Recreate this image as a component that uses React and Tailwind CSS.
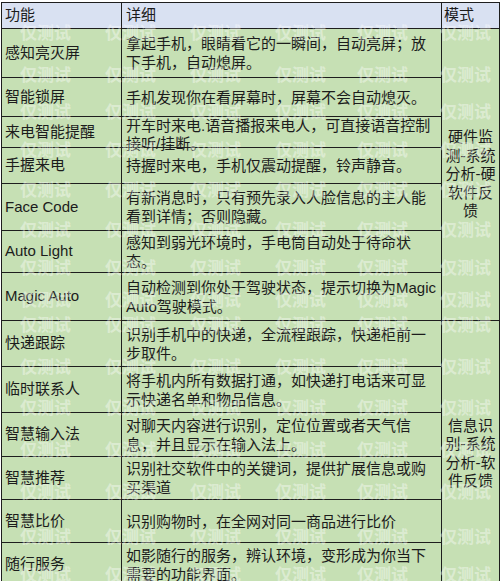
import React from "react";

const rows = [
  { h: "h-[49px]", name: "感知亮灭屏", lines: ["拿起手机，眼睛看它的一瞬间，自动亮屏；放", "下手机，自动熄屏。"] },
  { h: "h-[39px]", name: "智能锁屏", lines: ["手机发现你在看屏幕时，屏幕不会自动熄灭。"] },
  { h: "h-[31px]", name: "来电智能提醒", lines: ["开车时来电.语音播报来电人，可直接语音控制", "接听/挂断。"], tight: true },
  { h: "h-[36px]", name: "手握来电", lines: ["持握时来电，手机仅震动提醒，铃声静音。"] },
  { h: "h-[47px]", name: "Face Code", lines: ["有新消息时，只有预先录入人脸信息的主人能", "看到详情；否则隐藏。"] },
  { h: "h-[42px]", name: "Auto Light", lines: ["感知到弱光环境时，手电筒自动处于待命状", "态。"] },
  { h: "h-[48px]", name: "Magic Auto", lines: ["自动检测到你处于驾驶状态，提示切换为Magic", "Auto驾驶模式。"] },
  { h: "h-[46px]", name: "快递跟踪", lines: ["识别手机中的快递，全流程跟踪，快递柜前一", "步取件。"] },
  { h: "h-[46px]", name: "临时联系人", lines: ["将手机内所有数据打通，如快递打电话来可显", "示快递名单和物品信息。"] },
  { h: "h-[44px]", name: "智慧输入法", lines: ["对聊天内容进行识别，定位位置或者天气信", "息，并且显示在输入法上。"] },
  { h: "h-[43px]", name: "智慧推荐", lines: ["识别社交软件中的关键词，提供扩展信息或购", "买渠道"] },
  { h: "h-[43px]", name: "智慧比价", lines: ["识别购物时，在全网对同一商品进行比价"] },
  { h: "h-[44px]", name: "随行服务", lines: ["如影随行的服务，辨认环境，变形成为你当下", "需要的功能界面。"] },
];

const wmX = [20, 105, 190, 275, 357, 440];
const wmY = [33, 75, 112, 150, 190, 230, 268, 300, 325, 367, 408, 450, 492, 537, 575];

function Row({ r }) {
  return (
    <div className={`flex ${r.h}`}>
      <div className="w-[120px] shrink-0 flex items-center pl-[3px] border-r border-b border-[#1e1e1e] whitespace-nowrap">
        {r.name}
      </div>
      <div
        className={`w-[320px] shrink-0 flex flex-col justify-center pl-[4px] border-r border-b border-[#1e1e1e] whitespace-nowrap ${
          r.tight ? "leading-[18px] pt-[6px]" : "leading-[19px]"
        }`}
      >
        {r.lines.map((l, i) => (
          <div key={i}>{l}</div>
        ))}
      </div>
    </div>
  );
}

export default function App() {
  const first = rows.slice(0, 7);
  const second = rows.slice(7);
  return (
    <div className="relative w-[500px] h-[581px] overflow-hidden bg-white pt-[2px] pl-[1px] text-[15px] text-[#1c1c1c] font-['Liberation_Sans','Noto_Sans_CJK_SC',sans-serif]">
      <div className="w-[499px] border-l border-t border-[#1e1e1e] bg-[#c6e0b4]">
        <div className="flex h-[26px] bg-[#d9e1f2]">
          <div className="w-[120px] flex items-center pl-[3px] border-r border-b border-[#1e1e1e]">功能</div>
          <div className="w-[320px] flex items-center pl-[4px] border-r border-b border-[#1e1e1e]">详细</div>
          <div className="w-[58px] flex items-center pl-[2px] border-r border-b border-[#1e1e1e]">模式</div>
        </div>
        <div className="flex">
          <div className="flex flex-col">
            {rows.map((r, i) => (
              <Row key={i} r={r} />
            ))}
          </div>
          <div className="flex flex-col w-[58px]">
            <div className="h-[292px] flex items-center justify-center text-center leading-[18.5px] border-r border-b border-[#1e1e1e]">
              <div>
                硬件监<br />测-系统<br />分析-硬<br />软件反<br />馈
              </div>
            </div>
            <div className="h-[266px] flex items-center justify-center text-center leading-[18.5px] border-r border-b border-[#1e1e1e]">
              <div>
                信息识<br />别-系统<br />分析-软<br />件反馈
              </div>
            </div>
          </div>
        </div>
      </div>
      <div className="absolute inset-0 pointer-events-none">
        {wmY.map((y) =>
          wmX.map((x) => (
            <span
              key={`${x}-${y}`}
              className="absolute text-[17px] font-bold text-white/40 whitespace-nowrap leading-none"
              style={{ left: x, top: y - 8 }}
            >
              仅测试
            </span>
          ))
        )}
      </div>
    </div>
  );
}
